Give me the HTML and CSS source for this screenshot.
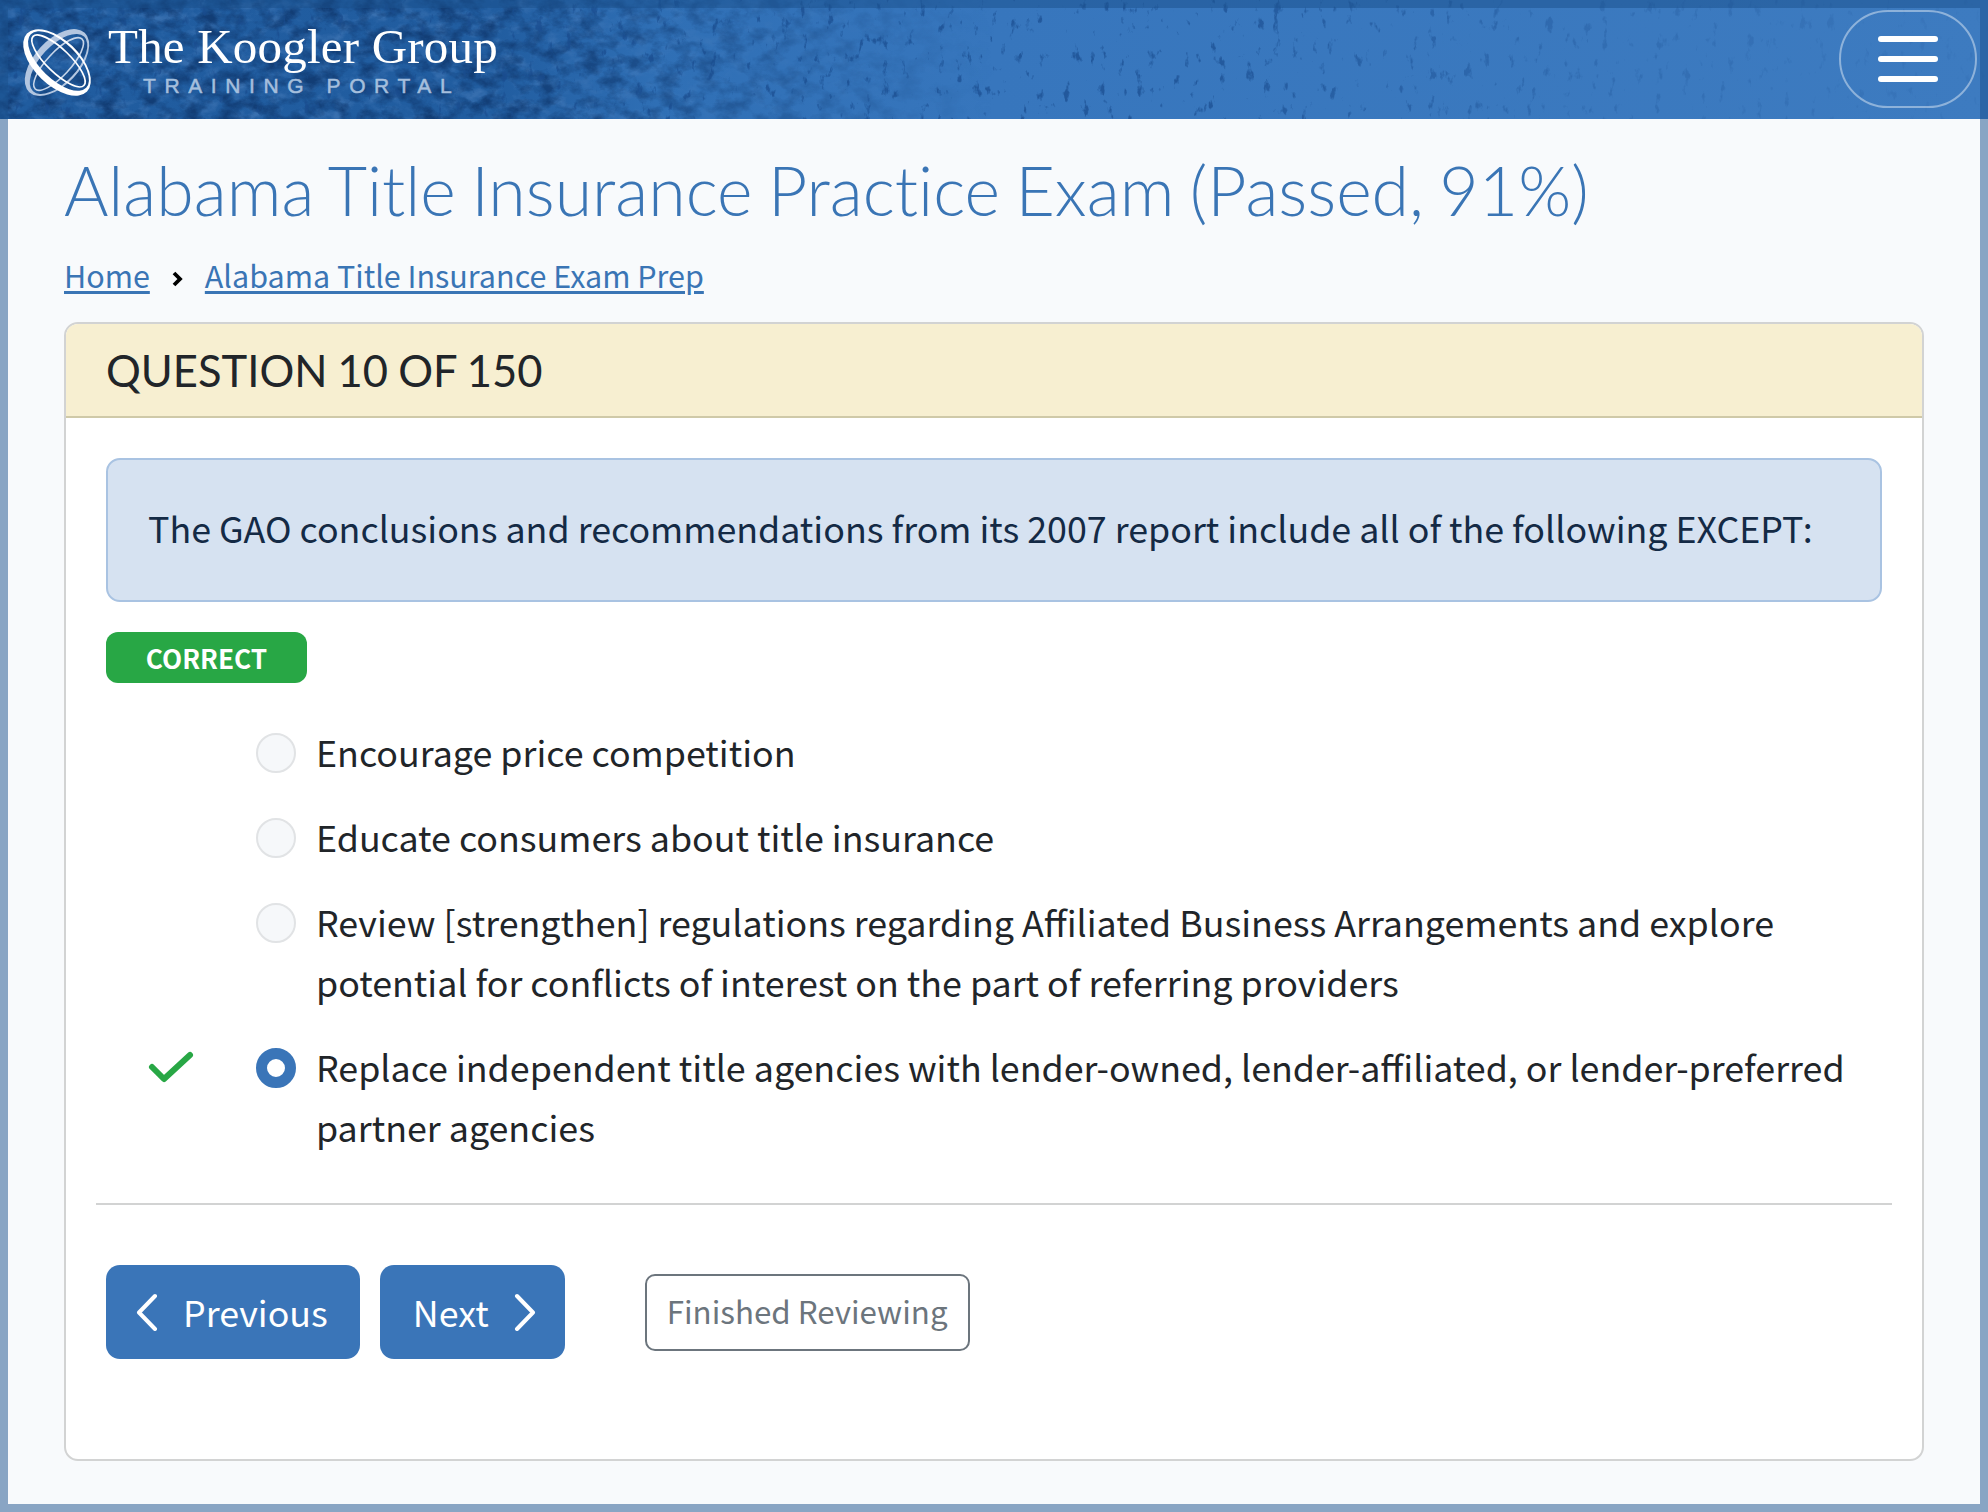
FILE: index.html
```html
<!DOCTYPE html>
<html lang="en">
<head>
<meta charset="utf-8">
<title>Alabama Title Insurance Practice Exam</title>
<link rel="stylesheet" href="styles.css">
</head>
<body>
<header class="topbar">
  <svg class="texture" width="100%" height="100%" aria-hidden="true">
    <defs>
      <linearGradient id="fadeLeft" x1="0" x2="1" y1="0" y2="0">
        <stop offset="0" stop-color="#fff"/>
        <stop offset="0.24" stop-color="#fff"/>
        <stop offset="0.36" stop-color="#777"/>
        <stop offset="0.5" stop-color="#000"/>
      </linearGradient>
      <linearGradient id="fadeSpeck" x1="0" x2="1" y1="0" y2="0">
        <stop offset="0" stop-color="#fff"/>
        <stop offset="0.6" stop-color="#fff"/>
        <stop offset="0.8" stop-color="#666"/>
        <stop offset="1" stop-color="#222"/>
      </linearGradient>
      <mask id="maskLeft"><rect width="100%" height="100%" fill="url(#fadeLeft)"/></mask>
      <mask id="maskSpeck"><rect width="100%" height="100%" fill="url(#fadeSpeck)"/></mask>
      <filter id="mottle" x="0" y="0" width="100%" height="100%" color-interpolation-filters="sRGB">
        <feTurbulence type="fractalNoise" baseFrequency="0.05 0.07" numOctaves="5" seed="7"/>
        <feColorMatrix type="matrix" values="0 0 0 0 0.07  0 0 0 0 0.24  0 0 0 0 0.46  2.6 0 0 0 -1.05"/>
      </filter>
      <filter id="glow" x="0" y="0" width="100%" height="100%" color-interpolation-filters="sRGB">
        <feTurbulence type="fractalNoise" baseFrequency="0.06 0.09" numOctaves="4" seed="31"/>
        <feColorMatrix type="matrix" values="0 0 0 0 0.3  0 0 0 0 0.5  0 0 0 0 0.74  0 2.6 0 0 -1.2"/>
      </filter>
      <filter id="speck" x="0" y="0" width="100%" height="100%" color-interpolation-filters="sRGB">
        <feTurbulence type="fractalNoise" baseFrequency="0.11 0.06" numOctaves="4" seed="12"/>
        <feColorMatrix type="matrix" values="0 0 0 0 0.1  0 0 0 0 0.3  0 0 0 0 0.56  8 0 0 0 -5.3"/>
      </filter>
    </defs>
    <rect width="100%" height="100%" filter="url(#glow)" mask="url(#maskLeft)" opacity="0.55"/>
    <rect width="100%" height="100%" filter="url(#mottle)" mask="url(#maskLeft)"/>
    <rect width="100%" height="100%" filter="url(#speck)" mask="url(#maskSpeck)" opacity="0.7"/>
  </svg>
  <a class="brand" href="#">
    <svg class="brand-mark" viewBox="0 0 110 120" width="110" height="120" aria-hidden="true">
      <g transform="translate(57 62.5) rotate(-47) scale(1.07)">
        <path fill="#b3c6e0" fill-rule="evenodd" d="M-38 0a38 21 0 1 0 76 0a38 21 0 1 0-76 0ZM-35 2a35 17 0 1 0 70 0a35 17 0 1 0-70 0Z"/>
        <ellipse cx="0" cy="2" rx="32" ry="11" fill="none" stroke="#c6d5e9" stroke-width="1.5"/>
      </g>
      <g transform="translate(57 62.5) rotate(44) scale(1.07)">
        <path fill="#fff" fill-rule="evenodd" d="M-39 0a39 21 0 1 0 78 0a39 21 0 1 0-78 0ZM-36-2a36 17 0 1 0 72 0a36 17 0 1 0-72 0Z"/>
        <ellipse cx="0" cy="-2" rx="33" ry="11" fill="none" stroke="#fff" stroke-width="1.6"/>
      </g>
    </svg>
    <span class="brand-text">
      <span class="brand-name">The Koogler Group</span>
      <span class="brand-sub">TRAINING PORTAL</span>
    </span>
  </a>
  <button class="menu" type="button" aria-label="Menu">
    <span class="menu-bar"></span><span class="menu-bar"></span><span class="menu-bar"></span>
  </button>
</header>

<main class="page">
  <h1 class="title">Alabama Title Insurance Practice Exam (Passed, 91%)</h1>
  <nav class="crumbs">
    <a href="#">Home</a>
    <svg class="crumb-sep" viewBox="0 0 11 16" width="11" height="16" aria-hidden="true"><path d="M2 2 8 8 2 14" fill="none" stroke="#000" stroke-width="3.8"/></svg>
    <a href="#">Alabama Title Insurance Exam Prep</a>
  </nav>

  <section class="card">
    <h2 class="card-head">QUESTION 10 OF 150</h2>
    <div class="card-body">
      <div class="prompt">The GAO conclusions and recommendations from its 2007 report include all of the following EXCEPT:</div>
      <div class="badge">CORRECT</div>
      <ul class="options">
        <li class="option"><span class="mark"></span><span class="radio"></span><span class="label">Encourage price competition</span></li>
        <li class="option"><span class="mark"></span><span class="radio"></span><span class="label">Educate consumers about title insurance</span></li>
        <li class="option"><span class="mark"></span><span class="radio"></span><span class="label">Review [strengthen] regulations regarding Affiliated Business Arrangements and explore potential for conflicts of interest on the part of referring providers</span></li>
        <li class="option"><span class="mark"><svg viewBox="0 0 48 34" width="48" height="34" aria-hidden="true"><path d="M5 17 17 29 43 5" fill="none" stroke="#28a745" stroke-width="6" stroke-linecap="round" stroke-linejoin="round"/></svg></span><span class="radio radio-on"></span><span class="label">Replace independent title agencies with lender-owned, lender-affiliated, or lender-preferred partner agencies</span></li>
      </ul>
      <hr class="rule">
      <div class="actions">
        <a class="btn btn-prev" href="#"><svg viewBox="0 0 24 38" width="24" height="38" aria-hidden="true"><path d="M21 3 5 19.5 21 36" fill="none" stroke="#fff" stroke-width="4" stroke-linecap="round" stroke-linejoin="round"/></svg><span class="btn-text">Previous</span></a>
        <a class="btn btn-next" href="#"><span class="btn-text">Next</span><svg viewBox="0 0 24 38" width="24" height="38" aria-hidden="true"><path d="M3 3 19 19.5 3 36" fill="none" stroke="#fff" stroke-width="4" stroke-linecap="round" stroke-linejoin="round"/></svg></a>
        <a class="btn-outline" href="#">Finished Reviewing</a>
      </div>
    </div>
  </section>
</main>
<div class="frame"></div>
</body>
</html>
```
FILE: styles.css
```css
* { box-sizing: border-box; }
html, body { margin: 0; padding: 0; }
body {
  height: 1512px;
  overflow: hidden;
  background: #f8fafc;
  color: #212529;
  font-family: "Noto Sans CJK SC", "Noto Sans", sans-serif;
}
.frame {
  position: fixed;
  inset: 0;
  border: 8px solid rgba(25, 80, 140, 0.5);
  pointer-events: none;
}
.topbar {
  position: relative;
  height: 119px;
  display: flex;
  align-items: center;
  justify-content: space-between;
  padding: 0 11px 0 0;
  background: linear-gradient(90deg, #205c9f 0%, #215da0 25%, #2f6fb5 33%, #3776bd 50%, #3d7bc0 100%);
  overflow: hidden;
}
.texture { position: absolute; inset: 0; }
.brand {
  position: relative;
  display: flex;
  align-items: flex-start;
  height: 119px;
  color: #fff;
  text-decoration: none;
}
.brand-mark { flex: none; }
.brand-text { display: flex; flex-direction: column; padding-top: 22px; margin-left: -2px; }
.brand-name {
  font-family: "Liberation Serif", serif;
  font-size: 49px;
  line-height: 50px;
  letter-spacing: 0.2px;
  white-space: nowrap;
}
.brand-sub {
  font-family: "Liberation Sans", sans-serif;
  font-size: 21px;
  line-height: 24px;
  letter-spacing: 8.6px;
  margin: 2px 0 0 35px;
  color: #a5bfdd;
  -webkit-text-stroke: 0.5px #a5bfdd;
  white-space: nowrap;
}
.menu {
  position: relative;
  width: 138px;
  height: 98px;
  margin-top: -1px;
  padding: 0;
  display: flex;
  flex-direction: column;
  align-items: center;
  justify-content: center;
  gap: 14px;
  background: transparent;
  border: 2px solid rgba(255, 255, 255, 0.42);
  border-radius: 49px;
}
.menu-bar { display: block; width: 60px; height: 6px; border-radius: 3px; background: #fff; }

.page { padding: 0 64px; }
.title {
  margin: 33px 0 0;
  font-family: Lato, sans-serif;
  font-weight: 300;
  font-size: 68px;
  line-height: 76px;
  word-spacing: -3.1px;
  font-variant-ligatures: none;
  color: #3a75b5;
  white-space: nowrap;
}
.crumbs {
  display: flex;
  align-items: center;
  height: 44px;
  margin-top: 25px;
  font-size: 30.5px;
  line-height: 44px;
}
.crumbs a {
  color: #3a75b5;
  text-decoration: underline;
  text-decoration-thickness: 2.5px;
  text-underline-offset: 3px;
}
.crumb-sep { margin: 8px 22px 0 22px; }

.card {
  margin-top: 25px;
  height: 1139px;
  background: #fff;
  border: 2px solid #d2d3d3;
  border-radius: 14px;
  overflow: hidden;
}
.card-head {
  margin: 0;
  height: 94px;
  padding: 0 40px;
  display: flex;
  align-items: center;
  background: #f7efd1;
  border-bottom: 2px solid #cfc9a8;
  font-family: Lato, sans-serif;
  font-weight: 400;
  font-size: 43.5px;
  word-spacing: -1px;
  color: #212529;
}
.card-body { padding: 40px 30px 0; display: flow-root; }
.prompt {
  margin: 0 10px;
  height: 144px;
  padding: 0 40px 7px;
  display: flex;
  align-items: center;
  background: #d6e2f1;
  border: 2px solid #a9c3e2;
  border-radius: 14px;
  color: #142a45;
  font-size: 35.8px;
  white-space: nowrap;
}
.badge {
  margin: 30px 10px 0;
  width: 201px;
  height: 51px;
  display: flex;
  align-items: center;
  justify-content: center;
  background: #28a745;
  border-radius: 12px;
  color: #fff;
  font-weight: 700;
  font-size: 26.2px;
}
.options { list-style: none; margin: 40px 0 0; padding: 0 10px; }
.option { display: flex; align-items: flex-start; margin-bottom: 25px; font-size: 35.8px; line-height: 60px; }
.mark { flex: none; width: 150px; height: 60px; padding: 12px 0 0 41px; }
.mark svg { display: block; }
.radio {
  flex: none;
  width: 40px;
  height: 40px;
  margin-top: 10px;
  border-radius: 50%;
  background: #f6f8fa;
  border: 2px solid #e1e3e5;
}
.radio-on { background: #fff; border: 11px solid #3a75b8; }
.label { margin: -2px 0 0 20px; padding-bottom: 2px; width: 1560px; }
.rule { margin: 45px 0 0; padding: 0; height: 2px; border: 0; background: #d2d3d3; }
.actions { display: flex; align-items: center; margin: 60px 10px 0; }
.btn {
  display: flex;
  align-items: center;
  height: 94px;
  background: #3a75b8;
  border-radius: 14px;
  color: #fff;
  font-size: 35.8px;
  text-decoration: none;
}
.btn-text { margin-bottom: 3px; }
.btn-prev { padding: 0 32px 0 28px; gap: 25px; }
.btn-next { margin-left: 20px; padding: 0 27px 0 33px; gap: 25px; }
.btn-outline {
  margin-left: 80px;
  width: 325px;
  height: 77px;
  padding-bottom: 3px;
  display: flex;
  align-items: center;
  justify-content: center;
  border: 2px solid #6c757d;
  border-radius: 10px;
  color: #6c757d;
  font-size: 31.3px;
  text-decoration: none;
}
```
